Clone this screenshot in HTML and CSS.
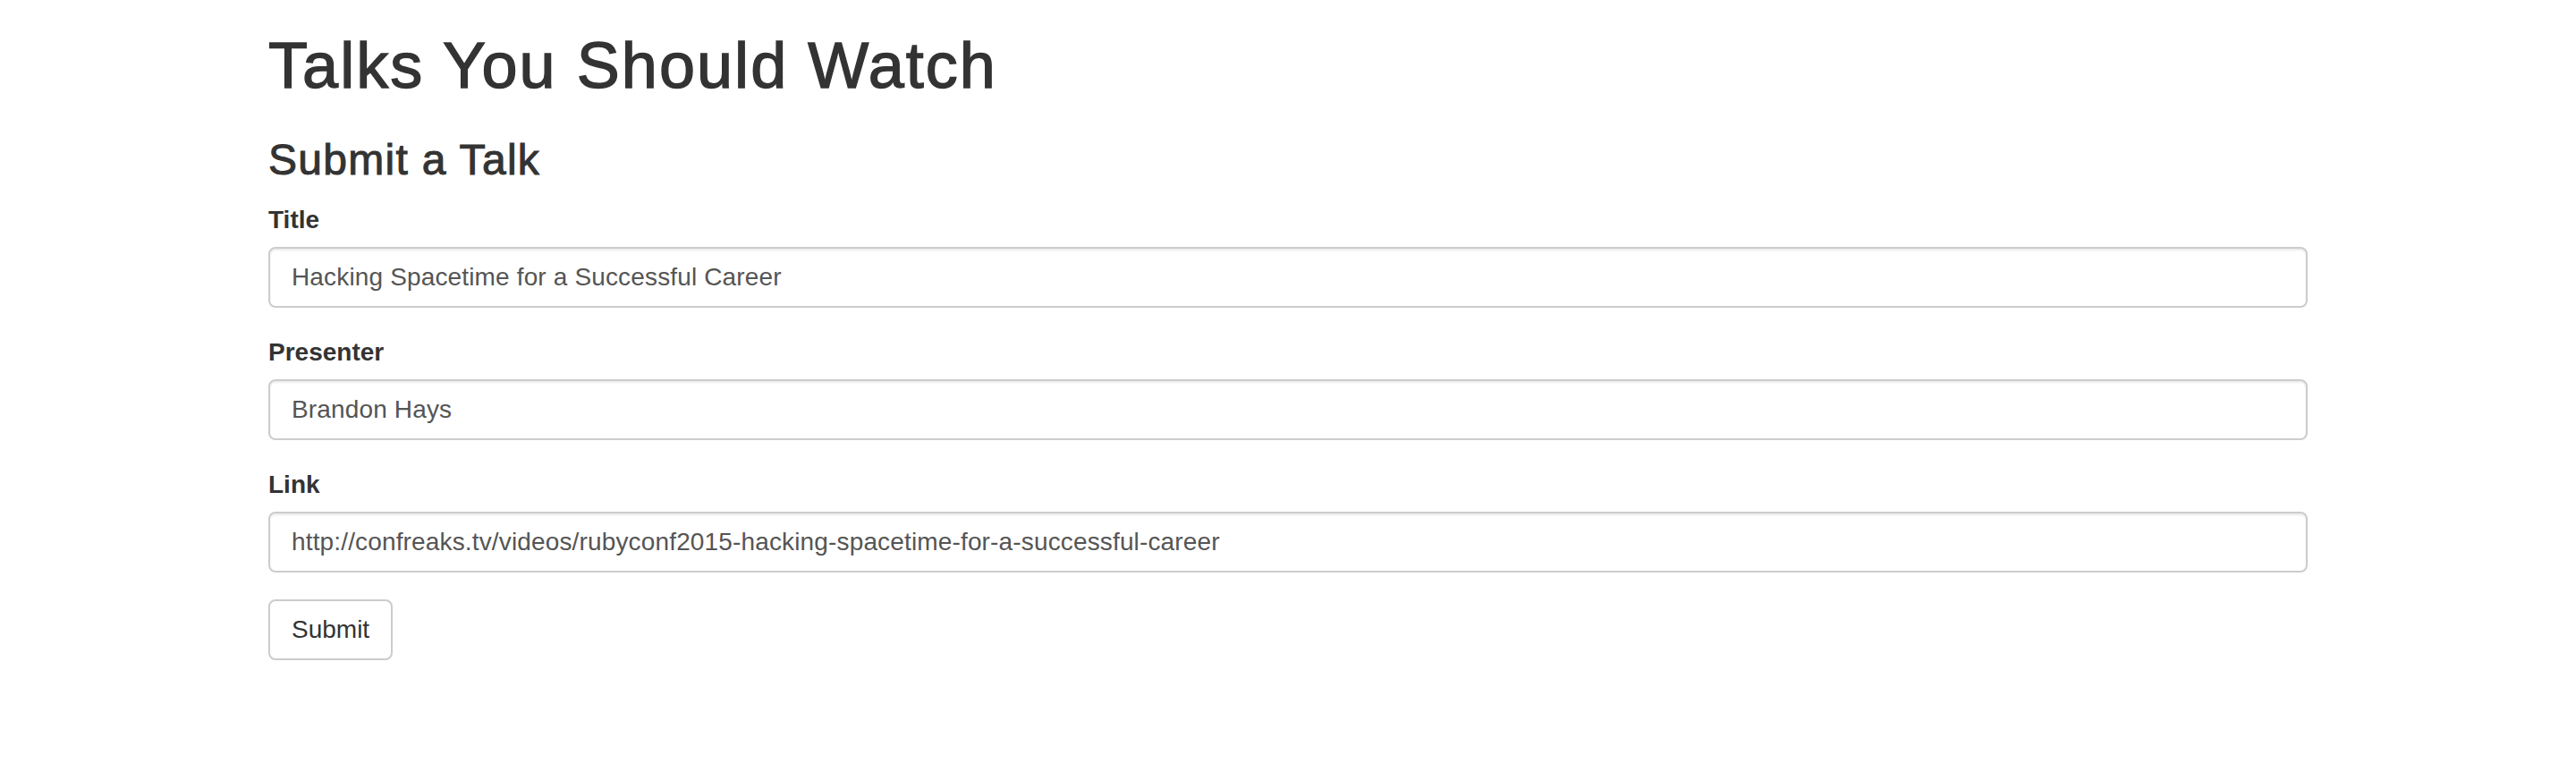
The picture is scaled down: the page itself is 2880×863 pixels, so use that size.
FILE: index.html
```html
<!DOCTYPE html>
<html lang="en">
<head>
<meta charset="utf-8">
<title>Talks You Should Watch</title>
<link rel="stylesheet" href="styles.css">
</head>
<body>
<div class="container">
  <h1 class="page-title">Talks You Should Watch</h1>
  <h3 class="section-title">Submit a Talk</h3>
  <form class="talk-form">
    <div class="form-group">
      <label class="form-label" for="title">Title</label>
      <input class="form-control" id="title" type="text" value="Hacking Spacetime for a Successful Career">
    </div>
    <div class="form-group">
      <label class="form-label" for="presenter">Presenter</label>
      <input class="form-control" id="presenter" type="text" value="Brandon Hays">
    </div>
    <div class="form-group">
      <label class="form-label" for="link">Link</label>
      <input class="form-control" id="link" type="text" value="http://confreaks.tv/videos/rubyconf2015-hacking-spacetime-for-a-successful-career">
    </div>
    <button class="btn" type="button">Submit</button>
  </form>
</div>
</body>
</html>
```
FILE: styles.css
```css
* { box-sizing: border-box; }
html, body {
  margin: 0;
  padding: 0;
  background: #fff;
}
body {
  font-family: "Liberation Sans", Arial, Helvetica, sans-serif;
  color: #333;
  font-size: 28px;
  line-height: 40px;
}
.container {
  width: 2280px;
  margin: 0 auto;
}
.page-title {
  margin: 34px 0 20px;
  font-size: 72px;
  line-height: 1.1;
  font-weight: 500;
  letter-spacing: 2.05px;
  -webkit-text-stroke: 1.4px #333;
  color: #333;
}
.section-title {
  margin: 40px 0 20px;
  font-size: 48px;
  line-height: 1.1;
  font-weight: 500;
  letter-spacing: 1.3px;
  -webkit-text-stroke: 1px #333;
  color: #333;
}
.talk-form {
  margin: 0;
}
.form-group {
  margin-bottom: 30px;
}
.form-label {
  display: inline-block;
  margin-bottom: 10px;
  font-weight: 700;
  font-size: 28px;
  line-height: 40px;
  color: #333;
}
.form-control {
  display: block;
  width: 100%;
  height: 68px;
  padding: 12px 24px;
  font-family: inherit;
  font-size: 28px;
  line-height: 40px;
  letter-spacing: 0.15px;
  color: #555;
  background: #fff;
  border: 2px solid #ccc;
  border-radius: 8px;
  box-shadow: inset 0 2px 2px rgba(0, 0, 0, 0.075);
  outline: none;
}
.btn {
  display: inline-block;
  height: 68px;
  padding: 12px 24px;
  font-family: inherit;
  font-size: 28px;
  line-height: 40px;
  color: #333;
  background: #fff;
  border: 2px solid #ccc;
  border-radius: 8px;
  cursor: pointer;
}
```
